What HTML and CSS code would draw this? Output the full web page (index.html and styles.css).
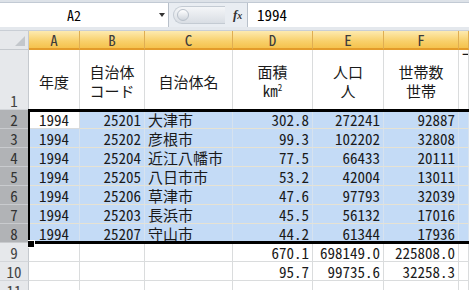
FILE: index.html
```html
<!DOCTYPE html>
<html lang="ja">
<head>
    <meta charset="UTF-8">
    <title>Sheet1</title>
    <link rel="stylesheet" href="styles.css">
</head>
<body>
    <div class="ribbon-edge"></div>
    <div class="formula-bar">
        <div class="name-box">
            <span class="name">A2</span>
            <span class="drop"></span>
        </div>
        <div class="fx-zone">
            <span class="capsule"><span class="knob"></span></span>
            <span class="fx">f<small>x</small></span>
        </div>
        <div class="formula-input">1994</div>
    </div>
    <div class="gap"></div>

    <div class="sheet">
        <div class="grid">
            <!-- column headers -->
            <div class="corner"><span class="tri"></span></div>
            <div class="ch">A</div>
            <div class="ch">B</div>
            <div class="ch">C</div>
            <div class="ch">D</div>
            <div class="ch">E</div>
            <div class="ch">F</div>
            <div class="ch"></div>

            <!-- row 1: headings -->
            <div class="rh bottom">1</div>
            <div class="c head"><span>年度</span></div>
            <div class="c head"><span>自治体<br>コード</span></div>
            <div class="c head"><span>自治体名</span></div>
            <div class="c head"><span>面積<br>km<sup>2</sup></span></div>
            <div class="c head"><span>人口<br>人</span></div>
            <div class="c head"><span>世帯数<br>世帯</span></div>
            <div class="c cut">一</div>

            <div class="rh on">2</div>
            <div class="c ctr active">1994</div>
            <div class="c num sel">25201</div>
            <div class="c sel">大津市</div>
            <div class="c num sel">302.8</div>
            <div class="c num sel">272241</div>
            <div class="c num sel">92887</div>
            <div class="c sel"></div>

            <div class="rh on">3</div>
            <div class="c ctr sel">1994</div>
            <div class="c num sel">25202</div>
            <div class="c sel">彦根市</div>
            <div class="c num sel">99.3</div>
            <div class="c num sel">102202</div>
            <div class="c num sel">32808</div>
            <div class="c sel"></div>

            <div class="rh on">4</div>
            <div class="c ctr sel">1994</div>
            <div class="c num sel">25204</div>
            <div class="c sel">近江八幡市</div>
            <div class="c num sel">77.5</div>
            <div class="c num sel">66433</div>
            <div class="c num sel">20111</div>
            <div class="c sel"></div>

            <div class="rh on">5</div>
            <div class="c ctr sel">1994</div>
            <div class="c num sel">25205</div>
            <div class="c sel">八日市市</div>
            <div class="c num sel">53.2</div>
            <div class="c num sel">42004</div>
            <div class="c num sel">13011</div>
            <div class="c sel"></div>

            <div class="rh on">6</div>
            <div class="c ctr sel">1994</div>
            <div class="c num sel">25206</div>
            <div class="c sel">草津市</div>
            <div class="c num sel">47.6</div>
            <div class="c num sel">97793</div>
            <div class="c num sel">32039</div>
            <div class="c sel"></div>

            <div class="rh on">7</div>
            <div class="c ctr sel">1994</div>
            <div class="c num sel">25203</div>
            <div class="c sel">長浜市</div>
            <div class="c num sel">45.5</div>
            <div class="c num sel">56132</div>
            <div class="c num sel">17016</div>
            <div class="c sel"></div>

            <div class="rh on">8</div>
            <div class="c ctr sel">1994</div>
            <div class="c num sel">25207</div>
            <div class="c sel">守山市</div>
            <div class="c num sel">44.2</div>
            <div class="c num sel">61344</div>
            <div class="c num sel">17936</div>
            <div class="c sel"></div>

            <div class="rh">9</div>
            <div class="c"></div>
            <div class="c"></div>
            <div class="c"></div>
            <div class="c num">670.1</div>
            <div class="c num">698149.0</div>
            <div class="c num">225808.0</div>
            <div class="c"></div>

            <div class="rh">10</div>
            <div class="c"></div>
            <div class="c"></div>
            <div class="c"></div>
            <div class="c num">95.7</div>
            <div class="c num">99735.6</div>
            <div class="c num">32258.3</div>
            <div class="c"></div>

            <div class="rh">11</div>
            <div class="c"></div>
            <div class="c"></div>
            <div class="c"></div>
            <div class="c"></div>
            <div class="c"></div>
            <div class="c"></div>
            <div class="c"></div>
        </div>

        <!-- selection outline over A2:G8 -->
        <div class="selection"></div>
        <div class="fill-handle"></div>
    </div>
</body>
</html>
```

FILE: styles.css
```css
html, body {
    margin: 0;
    padding: 0;
}
body {
    width: 469px;
    height: 290px;
    overflow: hidden;
    background: #e4e8ed;
    font-family: "Noto Sans CJK JP", "Liberation Sans", sans-serif;
    font-feature-settings: "hwid" 1;
    font-size: 15px;
    color: #1a1a1a;
}

/* formula bar */
.ribbon-edge {
    height: 3px;
    background: #dde2e8;
    border-bottom: 1px solid #c2cad4;
    box-sizing: border-box;
}
.formula-bar {
    display: flex;
    height: 24px;
}
.name-box {
    width: 169px;
    display: flex;
    align-items: center;
    background: white;
    border-right: 1px solid #b8c0ca;
    box-sizing: border-box;
}
.name {
    width: 148px;
    text-align: center;
    font-size: 14px;
    line-height: 24px;
    color: #000;
}
.drop {
    width: 0;
    height: 0;
    margin-left: 11px;
    border-left: 3px solid transparent;
    border-right: 3px solid transparent;
    border-top: 4px solid #333;
}
.fx-zone {
    width: 79px;
    display: flex;
    align-items: center;
    background: #e9edf2;
    border-right: 1px solid #b8c0ca;
    box-sizing: border-box;
}
.capsule {
    width: 52px;
    height: 18px;
    margin-left: 4px;
    border-radius: 9px 0 0 9px;
    background: linear-gradient(#f4f6f8, #d9dee4);
    border: 1px solid #c4cbd3;
    border-right: none;
    display: flex;
    align-items: center;
    box-sizing: border-box;
}
.knob {
    width: 10px;
    height: 10px;
    margin-left: 3px;
    border-radius: 50%;
    background: linear-gradient(#ffffff, #cfd5dc);
    border: 1px solid #b8c0ca;
}
.fx {
    margin-left: 8px;
    font-family: "Liberation Serif", serif;
    font-style: italic;
    font-weight: bold;
    font-size: 13px;
    color: #333;
}
.fx small {
    font-size: 10px;
}
.formula-input {
    flex: 1;
    background: white;
    padding-left: 9px;
    line-height: 24px;
    font-size: 15px;
    color: #000;
}
.gap {
    height: 4px;
    border-bottom: 1px solid #c9ced5;
    box-sizing: border-box;
}

/* worksheet */
.sheet {
    position: relative;
    overflow: hidden;
    height: 259px;
}
.grid {
    display: grid;
    grid-template-columns: 29px 51px 65px 88px 80px 71px 75px 10px;
    grid-template-rows: 19px 60px repeat(10, 19px);
}
.corner {
    background: #e6e8eb;
    border-right: 1px solid #c5c9ce;
    border-bottom: 1px solid #c5c9ce;
    position: relative;
}
.tri {
    position: absolute;
    right: 3px;
    bottom: 3px;
    width: 0;
    height: 0;
    border-left: 10px solid transparent;
    border-bottom: 10px solid #c3c7cc;
}
.ch {
    display: flex;
    align-items: center;
    justify-content: center;
    background: linear-gradient(#fdeab0, #f8d06a 60%, #f5c24d);
    border-right: 1px solid #dfae52;
    border-bottom: 2px solid #e39b2a;
    color: #3c3c3c;
    font-size: 15px;
    line-height: 1;
}
.rh {
    display: flex;
    align-items: center;
    justify-content: center;
    background: #e6e8eb;
    border-right: 1px solid #c5c9ce;
    border-bottom: 1px solid #d3d6da;
    color: #444;
    line-height: 1;
}
.rh.bottom {
    align-items: flex-end;
    padding-bottom: 1px;
}
.rh.on {
    background: #b1b3b6;
    border-bottom-color: #c9cbce;
    color: #333;
}
.c {
    display: flex;
    align-items: center;
    background: white;
    border-right: 1px solid #dadcdd;
    border-bottom: 1px solid #dadcdd;
    padding: 0 3px;
    line-height: 19px;
    white-space: nowrap;
    overflow: hidden;
}
.num {
    justify-content: flex-end;
}
.ctr {
    justify-content: center;
}
.head {
    justify-content: center;
    text-align: center;
    padding-top: 3px;
}
.head sup {
    font-size: 9px;
    line-height: 0;
    vertical-align: 6px;
}
.cut {
    align-items: flex-start;
    line-height: 8px;
}
.sel {
    background: #c4dbf6;
    border-right-color: #d6e2ef;
    border-bottom-color: #e6e2d3;
}
.active {
    background: white;
}

/* selection outline, drawn over the cells */
.selection {
    position: absolute;
    left: 28px;
    top: 78px;
    width: 460px;
    height: 135px;
    border: 3px solid #000;
    border-left-width: 2px;
    box-sizing: border-box;
}
.fill-handle {
    position: absolute;
    left: 28px;
    top: 209px;
    width: 6px;
    height: 6px;
    background: #000;
    border: 1px solid white;
    border-left: none;
}
```
